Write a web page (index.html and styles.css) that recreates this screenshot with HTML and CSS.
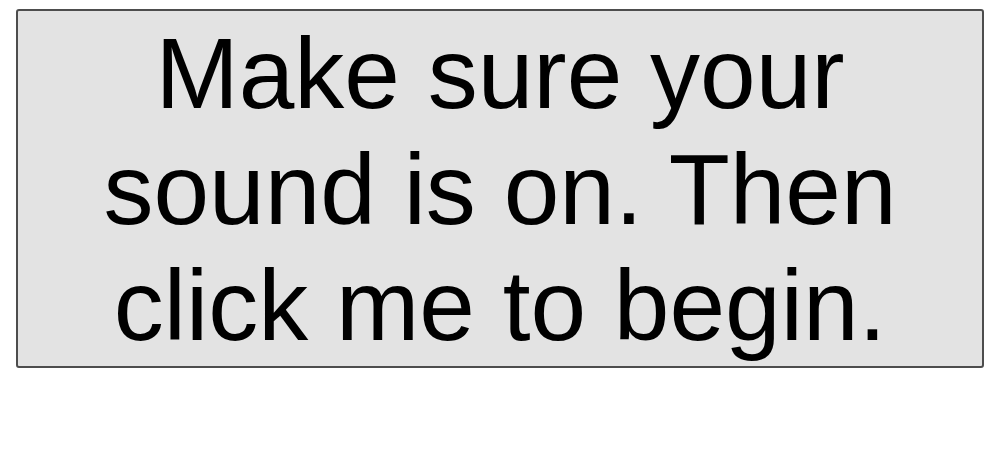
FILE: index.html
```html
<!DOCTYPE html>
<html>
<head>
<meta charset="utf-8">
<link rel="stylesheet" href="styles.css">
</head>
<body>
<button class="start">Make sure your sound is on. Then click me to begin.</button>
</body>
</html>
```
FILE: styles.css
```css
body {
  margin: 0;
  background: #ffffff;
}
.start {
  display: block;
  box-sizing: border-box;
  width: 968px;
  height: 359px;
  margin: 9px 0 0 16px;
  padding: 0 40px;
  font-family: "Liberation Sans", Arial, sans-serif;
  font-size: 100px;
  line-height: 116px;
  color: #000000;
  background: #e3e3e3;
  border: 2px solid #4d4d4d;
  border-radius: 3px;
  text-align: center;
}
```
